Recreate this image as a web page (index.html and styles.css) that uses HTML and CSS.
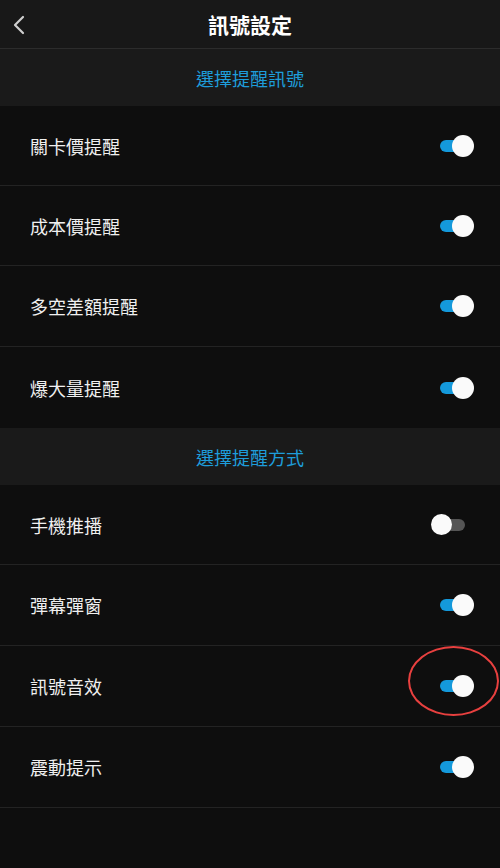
FILE: index.html
```html
<!DOCTYPE html>
<html lang="zh-Hant">
<head>
<meta charset="utf-8">
<link rel="stylesheet" href="styles.css">
</head>
<body>
<div class="page">
  <header class="topbar">
    <svg class="back" width="14" height="22" viewBox="0 0 14 22"><path d="M11 3 L3 11 L11 19" fill="none" stroke="#cfcfcf" stroke-width="2.2" stroke-linecap="round" stroke-linejoin="round"/></svg>
    <h1 class="title">訊號設定</h1>
  </header>
  <div class="section">選擇提醒訊號</div>
  <div class="row"><span class="label">關卡價提醒</span><span class="toggle on"></span></div>
  <div class="row"><span class="label">成本價提醒</span><span class="toggle on"></span></div>
  <div class="row tall"><span class="label">多空差額提醒</span><span class="toggle on"></span></div>
  <div class="row last"><span class="label">爆大量提醒</span><span class="toggle on"></span></div>
  <div class="section">選擇提醒方式</div>
  <div class="row"><span class="label">手機推播</span><span class="toggle off"></span></div>
  <div class="row tall"><span class="label">彈幕彈窗</span><span class="toggle on"></span></div>
  <div class="row tall"><span class="label">訊號音效</span><span class="toggle on"></span><span class="circle"></span></div>
  <div class="row tall"><span class="label">震動提示</span><span class="toggle on"></span></div>
</div>
</body>
</html>
```
FILE: styles.css
```css
html, body {
  margin: 0;
  padding: 0;
  background: #0e0e0e;
}
body {
  font-family: "Noto Sans CJK TC", "Noto Sans", sans-serif;
  color: #f0f0f0;
}
.page {
  width: 500px;
  min-height: 868px;
  background: #0e0e0e;
}
.topbar {
  height: 48px;
  background: #181818;
  border-bottom: 1px solid #2c2c2c;
  display: flex;
  align-items: center;
  justify-content: center;
  position: relative;
}
.back {
  position: absolute;
  left: 12px;
  top: 14px;
}
.title {
  margin: 0;
  font-size: 21px;
  font-weight: 700;
  color: #ffffff;
  line-height: 1;
}
.section {
  height: 57px;
  background: #1a1a1a;
  color: #1e9ddb;
  font-size: 18px;
  display: flex;
  align-items: center;
  justify-content: center;
}
.row {
  height: 79px;
  border-bottom: 1px solid #232323;
  display: flex;
  align-items: center;
  justify-content: space-between;
  padding: 0 26px 0 30px;
  position: relative;
}
.row.tall {
  height: 80px;
}
.row.last {
  height: 81px;
  border-bottom: none;
}
.label {
  font-size: 18px;
  color: #f0f0f0;
}
.toggle {
  position: relative;
  width: 34px;
  height: 22px;
  display: block;
}
.toggle::before {
  content: "";
  position: absolute;
  left: 0;
  top: 5px;
  width: 30px;
  height: 12px;
  border-radius: 6px;
  background: #1499db;
}
.toggle::after {
  content: "";
  position: absolute;
  top: 0;
  width: 22px;
  height: 22px;
  border-radius: 50%;
  background: #fafafa;
}
.toggle.on::after {
  right: 0;
}
.toggle.off {
  margin-right: 8px;
}
.toggle.off::before {
  background: #555555;
  left: 9px;
  width: 24px;
}
.toggle.off::after {
  left: -1px;
  width: 21px;
  height: 21px;
}
.circle {
  position: absolute;
  left: 408px;
  top: 0;
  width: 87px;
  height: 66px;
  border: 2px solid #e8403f;
  border-radius: 50%;
}
```
